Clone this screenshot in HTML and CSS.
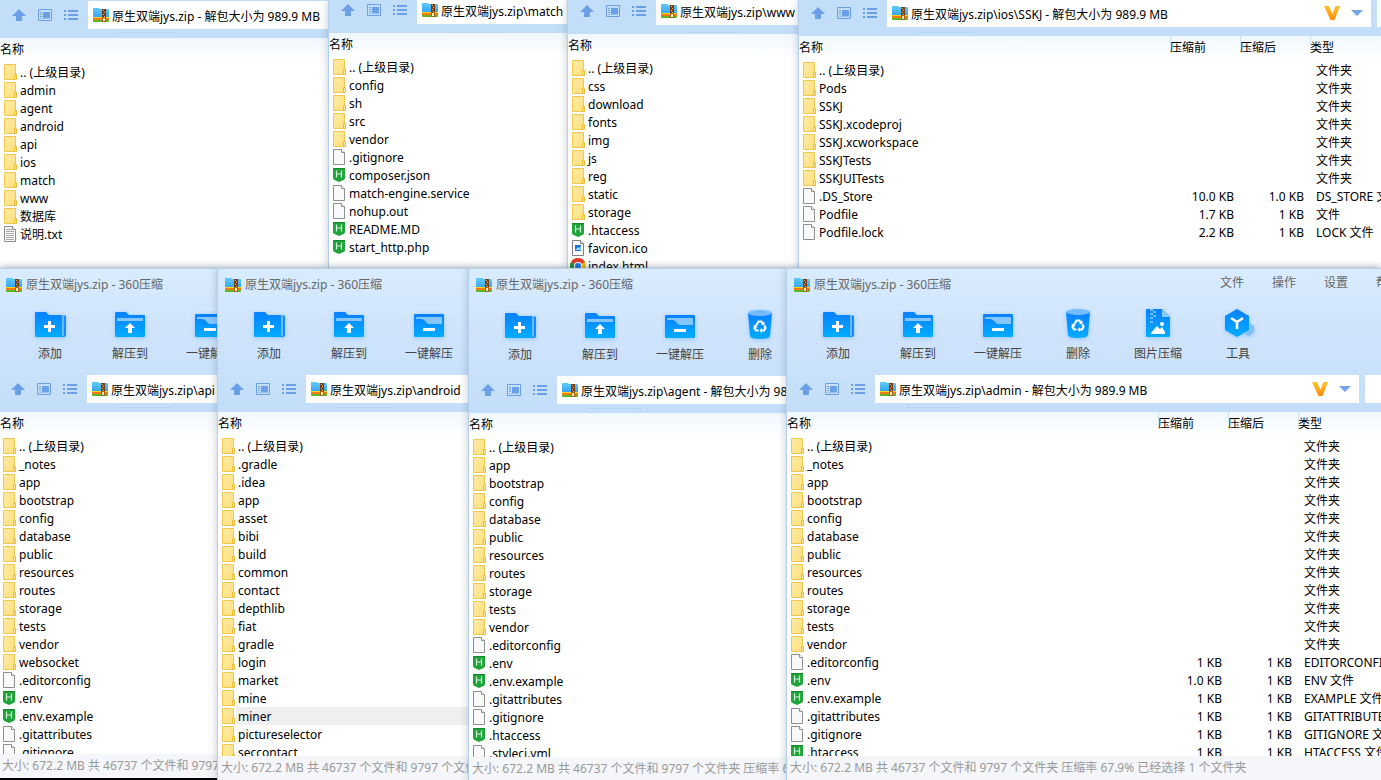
FILE: index.html
```html
<!DOCTYPE html>
<html lang="zh-CN">
<head>
<meta charset="utf-8">
<title>原生双端jys.zip - 360压缩</title>
<link rel="stylesheet" href="styles.css">
</head>
<body>
<svg class="sprite" aria-hidden="true">
  <defs>
    <linearGradient id="gBlue" x1="0" y1="0" x2="0" y2="1"><stop offset="0" stop-color="#0a80ff"/><stop offset="1" stop-color="#00adff"/></linearGradient>
    <linearGradient id="gFold" x1="0" y1="0" x2="1" y2="1"><stop offset="0" stop-color="#ffeaa6"/><stop offset="1" stop-color="#ffe07c"/></linearGradient>
    <linearGradient id="gZip" x1="0" y1="0" x2="0" y2="1"><stop offset="0" stop-color="#62cbfb"/><stop offset="1" stop-color="#2f9df0"/></linearGradient>
    <linearGradient id="gVip" x1="0" y1="0" x2="0" y2="1"><stop offset="0" stop-color="#ffc32e"/><stop offset="1" stop-color="#ff8a00"/></linearGradient>
  </defs>
  <symbol id="dir" viewBox="0 0 16 16"><path d="M.5.5h11v15H.5z" fill="url(#gFold)" stroke="#efc94f"/><path d="M10.500 10.500h2v5h-2z" fill="#ffe99b" stroke="#e9bd3c"/></symbol>
  <symbol id="doc" viewBox="0 0 16 16"><path d="M.5.5h8l3 3v12H.5z" fill="#f8f9fa" stroke="#8f8f8f"/><path d="M8.500.5v3h3" fill="#fff" stroke="#8f8f8f"/></symbol>
  <symbol id="txt" viewBox="0 0 16 16"><path d="M.5.5h8l3 3v12H.5z" fill="#f8f9fa" stroke="#8f8f8f"/><path d="M8.500.5v3h3" fill="#fff" stroke="#8f8f8f"/><path d="M2 3.500h6M2 5.500h8M2 7.500h8M2 9.500h8M2 11.500h8M2 13.500h8" stroke="#a9a9a9"/></symbol>
  <symbol id="hb" viewBox="0 0 16 16"><path d="M0 1h12v10q0 1.500-1.500 2L6 15l-4.500-2Q0 12.500 0 11z" fill="#1ea439"/><path d="M0 1h12v1H0z" fill="#178a2e"/><path d="M3.500 3.500v7M8.500 3.500v7M3.500 7h5" stroke="#d9f4dd" stroke-width="1.200" fill="none"/></symbol>
  <symbol id="ico" viewBox="0 0 16 16"><path d="M.5.5h8l3 3v12H.5z" fill="#fff" stroke="#7d7d7d"/><path d="M8.500.5v3h3" fill="#fff" stroke="#7d7d7d"/><path d="M3 5h6v6H3z" fill="#1c6fd6"/><path d="M3 10l3-3 1 1 2-2v4z" fill="#8fd0ff"/></symbol>
  <symbol id="chrome" viewBox="0 0 16 16"><circle cx="8" cy="8" r="8" fill="#fbc116"/><path d="M8 8L1.070 4A8 8 0 0 1 14.930 4z" fill="#e33b2e"/><path d="M8 8L8 16A8 8 0 0 1 1.070 4z" fill="#229342"/><circle cx="8" cy="8" r="4" fill="#fff"/><circle cx="8" cy="8" r="3" fill="#1a73e8"/></symbol>
  <symbol id="zip" viewBox="0 0 16 14"><path d="M0 0h6l1 1h8q1 0 1 1v9H0z" fill="url(#gZip)"/><path d="M0 9h16v1H0z" fill="#ffd21c"/><path d="M0 10h16v2H0z" fill="#f27c12"/><path d="M0 12h16v1q0 1-1 1H1q-1 0-1-1z" fill="#5fb51f"/><path d="M9 1h4v9H9z" fill="#7a3b12"/><path d="M10 2h1v1h-1zM11 4h1v1h-1zM10 6h1v1h-1zM11 8h1v1h-1z" fill="#ffb84a"/><path d="M9 9h4v5H9z" fill="#a3601c"/><path d="M10 10h2v3h-2z" fill="#fff1a8"/></symbol>
  <symbol id="up" viewBox="0 0 14 14"><path d="M7 1l7 7h-4v5H4V8H0z" fill="#6b9fe8"/></symbol>
  <symbol id="pane" viewBox="0 0 14 14"><path d="M.5 1.500h13v11H.5z" fill="none" stroke="#6b9fe8"/><path d="M5 4h7v6H5zM2 4h2v1H2zM2 6h2v1H2zM2 8h2v1H2z" fill="#6b9fe8"/><path d="M2 10h10v1H2z" fill="#9cc0f0"/></symbol>
  <symbol id="list" viewBox="0 0 14 14"><path d="M0 2h2v2H0zM4 2h10v2H4zM0 6h2v2H0zM4 6h10v2H4zM0 10h2v2H0zM4 10h10v2H4z" fill="#6b9fe8"/></symbol>
  <symbol id="vip" viewBox="0 0 16 14"><path d="M0 0h5l3.500 8L11.500 0H16l-5.500 14h-4z" fill="url(#gVip)"/></symbol>
  <symbol id="drop" viewBox="0 0 12 6"><path d="M0 0h12L6 6z" fill="#73a5ec"/></symbol>
  <symbol id="add" viewBox="0 0 32 32"><path d="M26 7h5q1 0 1 1v19q0 1-1 1h-5z" fill="#6cb8ff"/><path d="M30 8h2v19q0 2-2 2h-4v-1h3q1 0 1-1z" fill="#158dff"/><path d="M2 4h10l3 3h12q1 0 1 1v21H2q-1 0-1-1V5q0-1 1-1z" fill="url(#gBlue)"/><path d="M14 13h3v4h4v3h-4v4h-3v-4h-4v-3h4z" fill="#fff"/></symbol>
  <symbol id="extract" viewBox="0 0 32 32"><path d="M2 4h10l3 3h15q1 0 1 1v20q0 1-1 1H2q-1 0-1-1V5q0-1 1-1z" fill="url(#gBlue)"/><path d="M3 13v-2q0-1 1-1h24q1 0 1 1v2z" fill="#85c6ff"/><path d="M16 15l5 5h-3v5h-4v-5h-3z" fill="#fff"/></symbol>
  <symbol id="oneclick" viewBox="0 0 32 32"><rect x="1" y="6" width="30" height="23" rx="1" fill="url(#gBlue)"/><path d="M3 11v-1q0-1 1-1h24q1 0 1 1v6H17q-2 0-3-1l-3-3q-1-1-3-1z" fill="#85c6ff"/><path d="M10 20h12v3H10z" fill="#fff"/></symbol>
  <symbol id="trash" viewBox="0 0 32 32"><path d="M4 4h24l-2 23q-.3 3-10 3T6 27z" fill="url(#gBlue)"/><ellipse cx="16" cy="4" rx="12" ry="3" fill="#74bcff"/><g fill="none" stroke="#fff" stroke-width="2.200"><path d="M12.500 16l2-3.500h3l1.500 2.500"/><path d="M20.500 16.500l1 2.500-1.500 2.500h-3"/><path d="M14.500 21.500H12L10.500 19l1-2"/></g><path d="M20.500 12.500v4l-3.500-1zM18 19v5l-2.500-2.500zM9 16.500l3.500-1 .8 3.600z" fill="#fff"/></symbol>
  <symbol id="image" viewBox="0 0 32 32"><path d="M5 1h15l8 8v19q0 1-1 1H5q-1 0-1-1V2q0-1 1-1z" fill="url(#gBlue)"/><path d="M20 1l8 8h-8z" fill="#8cc9ff"/><path d="M8 1h3v2H8zM11 3h3v2h-3zM8 5h3v2H8zM11 7h3v2h-3zM8 9h3v2H8zM8 13h3v2H8z" fill="#72baff"/><path d="M9 26v-1l6-7 3 3 2-2 3 5v2z" fill="#fff"/><circle cx="20" cy="16" r="2" fill="#fff"/></symbol>
  <symbol id="tools" viewBox="0 0 32 32"><path d="M27 15l5 3v6l-5 4-4-2z" fill="#7fc1fb"/><path d="M15 1l12 7v14l-12 7-12-7V8z" fill="url(#gBlue)"/><path d="M9 10l6 4 6-4M15 14v7" fill="none" stroke="#fff" stroke-width="2.600"/></symbol>
</svg>

<main class="desktop">
<div class="row row-top">
  <section class="win win-root">
    <nav class="nav nav-38">
      <button class="nb" aria-label="向上"><svg><use href="#up"/></svg></button><button class="nb" aria-label="预览"><svg><use href="#pane"/></svg></button><button class="nb" aria-label="列表"><svg><use href="#list"/></svg></button>
      <label class="addr"><svg class="zip"><use href="#zip"/></svg><input aria-label="路径" value="原生双端jys.zip - 解包大小为 989.9 MB"></label>
    </nav>
    <div class="files"><table>
      <thead><tr><th>名称</th></tr></thead>
      <tbody>
      <tr><td><svg><use href="#dir"/></svg>.. (上级目录)</td></tr>
      <tr><td><svg><use href="#dir"/></svg>admin</td></tr>
      <tr><td><svg><use href="#dir"/></svg>agent</td></tr>
      <tr><td><svg><use href="#dir"/></svg>android</td></tr>
      <tr><td><svg><use href="#dir"/></svg>api</td></tr>
      <tr><td><svg><use href="#dir"/></svg>ios</td></tr>
      <tr><td><svg><use href="#dir"/></svg>match</td></tr>
      <tr><td><svg><use href="#dir"/></svg>www</td></tr>
      <tr><td><svg><use href="#dir"/></svg>数据库</td></tr>
      <tr><td><svg><use href="#txt"/></svg>说明.txt</td></tr>
      </tbody>
    </table></div>
  </section>

  <section class="win">
    <nav class="nav nav-33">
      <button class="nb" aria-label="向上"><svg><use href="#up"/></svg></button><button class="nb" aria-label="预览"><svg><use href="#pane"/></svg></button><button class="nb" aria-label="列表"><svg><use href="#list"/></svg></button>
      <label class="addr"><svg class="zip"><use href="#zip"/></svg><input aria-label="路径" value="原生双端jys.zip\match"></label>
    </nav>
    <div class="files"><table>
      <thead><tr><th>名称</th></tr></thead>
      <tbody>
      <tr><td><svg><use href="#dir"/></svg>.. (上级目录)</td></tr>
      <tr><td><svg><use href="#dir"/></svg>config</td></tr>
      <tr><td><svg><use href="#dir"/></svg>sh</td></tr>
      <tr><td><svg><use href="#dir"/></svg>src</td></tr>
      <tr><td><svg><use href="#dir"/></svg>vendor</td></tr>
      <tr><td><svg><use href="#doc"/></svg>.gitignore</td></tr>
      <tr><td><svg><use href="#hb"/></svg>composer.json</td></tr>
      <tr><td><svg><use href="#doc"/></svg>match-engine.service</td></tr>
      <tr><td><svg><use href="#doc"/></svg>nohup.out</td></tr>
      <tr><td><svg><use href="#hb"/></svg>README.MD</td></tr>
      <tr><td><svg><use href="#hb"/></svg>start_http.php</td></tr>
      </tbody>
    </table></div>
  </section>

  <section class="win">
    <nav class="nav nav-34">
      <button class="nb" aria-label="向上"><svg><use href="#up"/></svg></button><button class="nb" aria-label="预览"><svg><use href="#pane"/></svg></button><button class="nb" aria-label="列表"><svg><use href="#list"/></svg></button>
      <label class="addr"><svg class="zip"><use href="#zip"/></svg><input aria-label="路径" value="原生双端jys.zip\www"></label>
    </nav>
    <div class="files"><table>
      <thead><tr><th>名称</th></tr></thead>
      <tbody>
      <tr><td><svg><use href="#dir"/></svg>.. (上级目录)</td></tr>
      <tr><td><svg><use href="#dir"/></svg>css</td></tr>
      <tr><td><svg><use href="#dir"/></svg>download</td></tr>
      <tr><td><svg><use href="#dir"/></svg>fonts</td></tr>
      <tr><td><svg><use href="#dir"/></svg>img</td></tr>
      <tr><td><svg><use href="#dir"/></svg>js</td></tr>
      <tr><td><svg><use href="#dir"/></svg>reg</td></tr>
      <tr><td><svg><use href="#dir"/></svg>static</td></tr>
      <tr><td><svg><use href="#dir"/></svg>storage</td></tr>
      <tr><td><svg><use href="#hb"/></svg>.htaccess</td></tr>
      <tr><td><svg><use href="#ico"/></svg>favicon.ico</td></tr>
      <tr><td><svg class="wide"><use href="#chrome"/></svg>index.html</td></tr>
      </tbody>
    </table></div>
  </section>

  <section class="win">
    <nav class="nav nav-36">
      <button class="nb" aria-label="向上"><svg><use href="#up"/></svg></button><button class="nb" aria-label="预览"><svg><use href="#pane"/></svg></button><button class="nb" aria-label="列表"><svg><use href="#list"/></svg></button>
      <label class="addr"><svg class="zip"><use href="#zip"/></svg><input aria-label="路径" value="原生双端jys.zip\ios\SSKJ - 解包大小为 989.9 MB"><svg class="vip"><use href="#vip"/></svg><svg class="drop"><use href="#drop"/></svg></label>
      <input class="search search-s" aria-label="搜索">
    </nav>
    <div class="files"><table class="full">
      <colgroup><col class="c-name"><col class="c-size"><col class="c-size"><col></colgroup>
      <thead><tr><th>名称</th><th>压缩前</th><th>压缩后</th><th>类型</th></tr></thead>
      <tbody>
      <tr><td><svg><use href="#dir"/></svg>.. (上级目录)</td><td></td><td></td><td>文件夹</td></tr>
      <tr><td><svg><use href="#dir"/></svg>Pods</td><td></td><td></td><td>文件夹</td></tr>
      <tr><td><svg><use href="#dir"/></svg>SSKJ</td><td></td><td></td><td>文件夹</td></tr>
      <tr><td><svg><use href="#dir"/></svg>SSKJ.xcodeproj</td><td></td><td></td><td>文件夹</td></tr>
      <tr><td><svg><use href="#dir"/></svg>SSKJ.xcworkspace</td><td></td><td></td><td>文件夹</td></tr>
      <tr><td><svg><use href="#dir"/></svg>SSKJTests</td><td></td><td></td><td>文件夹</td></tr>
      <tr><td><svg><use href="#dir"/></svg>SSKJUITests</td><td></td><td></td><td>文件夹</td></tr>
      <tr><td><svg><use href="#doc"/></svg>.DS_Store</td><td>10.0 KB</td><td>1.0 KB</td><td>DS_STORE 文件</td></tr>
      <tr><td><svg><use href="#doc"/></svg>Podfile</td><td>1.7 KB</td><td>1 KB</td><td>文件</td></tr>
      <tr><td><svg><use href="#doc"/></svg>Podfile.lock</td><td>2.2 KB</td><td>1 KB</td><td>LOCK 文件</td></tr>
      </tbody>
    </table></div>
  </section>
</div>

<div class="row row-bottom">
  <section class="win win-api">
    <header class="title"><svg class="zip"><use href="#zip"/></svg><span>原生双端jys.zip - 360压缩</span></header>
    <div class="ribbon">
      <button><svg><use href="#add"/></svg>添加</button><button><svg><use href="#extract"/></svg>解压到</button><button><svg><use href="#oneclick"/></svg>一键解压</button>
    </div>
    <nav class="nav">
      <button class="nb" aria-label="向上"><svg><use href="#up"/></svg></button><button class="nb" aria-label="预览"><svg><use href="#pane"/></svg></button><button class="nb" aria-label="列表"><svg><use href="#list"/></svg></button>
      <label class="addr"><svg class="zip"><use href="#zip"/></svg><input aria-label="路径" value="原生双端jys.zip\api"></label>
    </nav>
    <div class="files"><table>
      <thead><tr><th>名称</th></tr></thead>
      <tbody>
      <tr><td><svg><use href="#dir"/></svg>.. (上级目录)</td></tr>
      <tr><td><svg><use href="#dir"/></svg>_notes</td></tr>
      <tr><td><svg><use href="#dir"/></svg>app</td></tr>
      <tr><td><svg><use href="#dir"/></svg>bootstrap</td></tr>
      <tr><td><svg><use href="#dir"/></svg>config</td></tr>
      <tr><td><svg><use href="#dir"/></svg>database</td></tr>
      <tr><td><svg><use href="#dir"/></svg>public</td></tr>
      <tr><td><svg><use href="#dir"/></svg>resources</td></tr>
      <tr><td><svg><use href="#dir"/></svg>routes</td></tr>
      <tr><td><svg><use href="#dir"/></svg>storage</td></tr>
      <tr><td><svg><use href="#dir"/></svg>tests</td></tr>
      <tr><td><svg><use href="#dir"/></svg>vendor</td></tr>
      <tr><td><svg><use href="#dir"/></svg>websocket</td></tr>
      <tr><td><svg><use href="#doc"/></svg>.editorconfig</td></tr>
      <tr><td><svg><use href="#hb"/></svg>.env</td></tr>
      <tr><td><svg><use href="#hb"/></svg>.env.example</td></tr>
      <tr><td><svg><use href="#doc"/></svg>.gitattributes</td></tr>
      <tr><td><svg><use href="#doc"/></svg>.gitignore</td></tr>
      </tbody>
    </table></div>
    <footer class="status">大小: 672.2 MB 共 46737 个文件和 9797 个文件夹</footer>
  </section>

  <section class="win">
    <header class="title"><svg class="zip"><use href="#zip"/></svg><span>原生双端jys.zip - 360压缩</span></header>
    <div class="ribbon">
      <button><svg><use href="#add"/></svg>添加</button><button><svg><use href="#extract"/></svg>解压到</button><button><svg><use href="#oneclick"/></svg>一键解压</button>
    </div>
    <nav class="nav">
      <button class="nb" aria-label="向上"><svg><use href="#up"/></svg></button><button class="nb" aria-label="预览"><svg><use href="#pane"/></svg></button><button class="nb" aria-label="列表"><svg><use href="#list"/></svg></button>
      <label class="addr"><svg class="zip"><use href="#zip"/></svg><input aria-label="路径" value="原生双端jys.zip\android"></label>
    </nav>
    <div class="files"><table>
      <thead><tr><th>名称</th></tr></thead>
      <tbody>
      <tr><td><svg><use href="#dir"/></svg>.. (上级目录)</td></tr>
      <tr><td><svg><use href="#dir"/></svg>.gradle</td></tr>
      <tr><td><svg><use href="#dir"/></svg>.idea</td></tr>
      <tr><td><svg><use href="#dir"/></svg>app</td></tr>
      <tr><td><svg><use href="#dir"/></svg>asset</td></tr>
      <tr><td><svg><use href="#dir"/></svg>bibi</td></tr>
      <tr><td><svg><use href="#dir"/></svg>build</td></tr>
      <tr><td><svg><use href="#dir"/></svg>common</td></tr>
      <tr><td><svg><use href="#dir"/></svg>contact</td></tr>
      <tr><td><svg><use href="#dir"/></svg>depthlib</td></tr>
      <tr><td><svg><use href="#dir"/></svg>fiat</td></tr>
      <tr><td><svg><use href="#dir"/></svg>gradle</td></tr>
      <tr><td><svg><use href="#dir"/></svg>login</td></tr>
      <tr><td><svg><use href="#dir"/></svg>market</td></tr>
      <tr><td><svg><use href="#dir"/></svg>mine</td></tr>
      <tr class="hover"><td><svg><use href="#dir"/></svg>miner</td></tr>
      <tr><td><svg><use href="#dir"/></svg>pictureselector</td></tr>
      <tr><td><svg><use href="#dir"/></svg>seccontact</td></tr>
      </tbody>
    </table></div>
    <footer class="status">大小: 672.2 MB 共 46737 个文件和 9797 个文件夹</footer>
  </section>

  <section class="win win-agent">
    <header class="title"><svg class="zip"><use href="#zip"/></svg><span>原生双端jys.zip - 360压缩</span></header>
    <div class="ribbon">
      <button><svg><use href="#add"/></svg>添加</button><button><svg><use href="#extract"/></svg>解压到</button><button><svg><use href="#oneclick"/></svg>一键解压</button><button><svg><use href="#trash"/></svg>删除</button>
    </div>
    <nav class="nav">
      <button class="nb" aria-label="向上"><svg><use href="#up"/></svg></button><button class="nb" aria-label="预览"><svg><use href="#pane"/></svg></button><button class="nb" aria-label="列表"><svg><use href="#list"/></svg></button>
      <label class="addr"><svg class="zip"><use href="#zip"/></svg><input aria-label="路径" value="原生双端jys.zip\agent - 解包大小为 989.9 MB"></label>
    </nav>
    <div class="files"><table>
      <thead><tr><th>名称</th></tr></thead>
      <tbody>
      <tr><td><svg><use href="#dir"/></svg>.. (上级目录)</td></tr>
      <tr><td><svg><use href="#dir"/></svg>app</td></tr>
      <tr><td><svg><use href="#dir"/></svg>bootstrap</td></tr>
      <tr><td><svg><use href="#dir"/></svg>config</td></tr>
      <tr><td><svg><use href="#dir"/></svg>database</td></tr>
      <tr><td><svg><use href="#dir"/></svg>public</td></tr>
      <tr><td><svg><use href="#dir"/></svg>resources</td></tr>
      <tr><td><svg><use href="#dir"/></svg>routes</td></tr>
      <tr><td><svg><use href="#dir"/></svg>storage</td></tr>
      <tr><td><svg><use href="#dir"/></svg>tests</td></tr>
      <tr><td><svg><use href="#dir"/></svg>vendor</td></tr>
      <tr><td><svg><use href="#doc"/></svg>.editorconfig</td></tr>
      <tr><td><svg><use href="#hb"/></svg>.env</td></tr>
      <tr><td><svg><use href="#hb"/></svg>.env.example</td></tr>
      <tr><td><svg><use href="#doc"/></svg>.gitattributes</td></tr>
      <tr><td><svg><use href="#doc"/></svg>.gitignore</td></tr>
      <tr><td><svg><use href="#hb"/></svg>.htaccess</td></tr>
      <tr><td><svg><use href="#doc"/></svg>.styleci.yml</td></tr>
      </tbody>
    </table></div>
    <footer class="status">大小: 672.2 MB 共 46737 个文件和 9797 个文件夹 压缩率 67.9%</footer>
  </section>

  <section class="win">
    <header class="title"><svg class="zip"><use href="#zip"/></svg><span>原生双端jys.zip - 360压缩</span>
      <div class="menu"><button>文件</button><button>操作</button><button>设置</button><button>帮助</button></div>
    </header>
    <div class="ribbon">
      <button><svg><use href="#add"/></svg>添加</button><button><svg><use href="#extract"/></svg>解压到</button><button><svg><use href="#oneclick"/></svg>一键解压</button><button><svg><use href="#trash"/></svg>删除</button><button><svg><use href="#image"/></svg>图片压缩</button><button><svg><use href="#tools"/></svg>工具</button>
    </div>
    <nav class="nav">
      <button class="nb" aria-label="向上"><svg><use href="#up"/></svg></button><button class="nb" aria-label="预览"><svg><use href="#pane"/></svg></button><button class="nb" aria-label="列表"><svg><use href="#list"/></svg></button>
      <label class="addr"><svg class="zip"><use href="#zip"/></svg><input aria-label="路径" value="原生双端jys.zip\admin - 解包大小为 989.9 MB"><svg class="vip"><use href="#vip"/></svg><svg class="drop"><use href="#drop"/></svg></label>
      <input class="search" aria-label="搜索">
    </nav>
    <div class="files"><table class="full">
      <colgroup><col class="c-name"><col class="c-size"><col class="c-size"><col></colgroup>
      <thead><tr><th>名称</th><th>压缩前</th><th>压缩后</th><th>类型</th></tr></thead>
      <tbody>
      <tr><td><svg><use href="#dir"/></svg>.. (上级目录)</td><td></td><td></td><td>文件夹</td></tr>
      <tr><td><svg><use href="#dir"/></svg>_notes</td><td></td><td></td><td>文件夹</td></tr>
      <tr><td><svg><use href="#dir"/></svg>app</td><td></td><td></td><td>文件夹</td></tr>
      <tr><td><svg><use href="#dir"/></svg>bootstrap</td><td></td><td></td><td>文件夹</td></tr>
      <tr><td><svg><use href="#dir"/></svg>config</td><td></td><td></td><td>文件夹</td></tr>
      <tr><td><svg><use href="#dir"/></svg>database</td><td></td><td></td><td>文件夹</td></tr>
      <tr><td><svg><use href="#dir"/></svg>public</td><td></td><td></td><td>文件夹</td></tr>
      <tr><td><svg><use href="#dir"/></svg>resources</td><td></td><td></td><td>文件夹</td></tr>
      <tr><td><svg><use href="#dir"/></svg>routes</td><td></td><td></td><td>文件夹</td></tr>
      <tr><td><svg><use href="#dir"/></svg>storage</td><td></td><td></td><td>文件夹</td></tr>
      <tr><td><svg><use href="#dir"/></svg>tests</td><td></td><td></td><td>文件夹</td></tr>
      <tr><td><svg><use href="#dir"/></svg>vendor</td><td></td><td></td><td>文件夹</td></tr>
      <tr><td><svg><use href="#doc"/></svg>.editorconfig</td><td>1 KB</td><td>1 KB</td><td>EDITORCONFIG 文件</td></tr>
      <tr><td><svg><use href="#hb"/></svg>.env</td><td>1.0 KB</td><td>1 KB</td><td>ENV 文件</td></tr>
      <tr><td><svg><use href="#hb"/></svg>.env.example</td><td>1 KB</td><td>1 KB</td><td>EXAMPLE 文件</td></tr>
      <tr><td><svg><use href="#doc"/></svg>.gitattributes</td><td>1 KB</td><td>1 KB</td><td>GITATTRIBUTES 文件</td></tr>
      <tr><td><svg><use href="#doc"/></svg>.gitignore</td><td>1 KB</td><td>1 KB</td><td>GITIGNORE 文件</td></tr>
      <tr><td><svg><use href="#hb"/></svg>.htaccess</td><td>1 KB</td><td>1 KB</td><td>HTACCESS 文件</td></tr>
      </tbody>
    </table></div>
    <footer class="status">大小: 672.2 MB 共 46737 个文件和 9797 个文件夹 压缩率 67.9% 已经选择 1 个文件夹</footer>
  </section>
</div>
</main>
</body>
</html>
```
FILE: styles.css
```css
* { box-sizing: border-box; }

body {
  margin: 0;
  background: #fff;
  color: #000;
  font: 12px/18px "Noto Sans", "Noto Sans CJK SC", sans-serif;
}

button,
input {
  font: inherit;
  color: inherit;
  border: 0;
  margin: 0;
  padding: 0;
  background: none;
}

.sprite {
  position: absolute;
  width: 0;
  height: 0;
}

/* Desktop: two rows of overlapping archive windows */
.desktop {
  display: grid;
  grid-template-rows: 268px minmax(0, 1fr);
  height: 100vh;
  overflow: hidden;
}

.row {
  display: grid;
  min-height: 0;
}

.row-top { grid-template-columns: 328fr 239fr 231fr 583fr; }

.row-bottom {
  grid-template-columns: 217fr 251fr 318fr 595fr;
  position: relative;
  box-shadow: 0 0 6px rgba(60, 80, 100, .35);
}

.win {
  position: relative;
  display: flex;
  flex-direction: column;
  min-width: 0;
  min-height: 0;
  overflow: hidden;
  white-space: nowrap;
  border-left: 1px solid #b3d1ef;
  box-shadow: 0 0 8px rgba(60, 80, 100, .3);
  background: linear-gradient(#d9ecff, #cfe4fb 64px, #c3def9 144px, #fff 144px);
}

.row-top .win { background: #fff; }
.row-bottom .win { border-top: 1px solid #b3d1ef; }
.win.win-root,
.win.win-api { border-left: 0; }
.row-bottom .win-api { border-bottom: 2px solid #000; }

/* Title bar */
.title {
  display: flex;
  align-items: center;
  flex: none;
  gap: 4px;
  height: 31px;
  padding-left: 7px;
  color: #666;
}

.win-api .title { padding-left: 6px; }
.win-agent .title { height: 32px; }

.zip {
  flex: none;
  width: 16px;
  height: 14px;
}

.menu {
  display: flex;
  gap: 28px;
  margin-left: auto;
  margin-right: -19px;
  padding-bottom: 4px;
}

/* Large command buttons */
.ribbon {
  display: flex;
  flex: none;
  height: 75px;
  padding-left: 11px;
  color: #444;
}

.win-api .ribbon { padding-left: 10px; }

.ribbon button {
  display: flex;
  flex: none;
  flex-direction: column;
  align-items: center;
  gap: 5px;
  width: 80px;
  padding-top: 8px;
}

.ribbon svg {
  width: 32px;
  height: 32px;
  filter: drop-shadow(0 1px 2px rgba(0, 120, 255, .3));
}

/* Navigation and address bar */
.nav {
  display: flex;
  flex: none;
  align-items: flex-end;
  height: 37px;
  padding: 0 0 9px 12px;
  background: linear-gradient(#b7d6f3, #b7d6f3) 119px 32px / 54px 1px no-repeat;
}

.row-top .nav { background-color: #c3def9; }
.win-api .nav { padding-left: 11px; }
.nav-38 { height: 38px; }
.nav-33 { height: 33px; }
.nav-34 { height: 34px; }
.nav-36 { height: 36px; }

.nb {
  display: flex;
  align-items: center;
  flex: none;
  width: 26px;
  height: 28px;
}

.nb:nth-child(3) { width: 24px; }

.nb svg {
  width: 14px;
  height: 14px;
}

.addr {
  display: flex;
  align-items: center;
  flex: 1;
  gap: 3px;
  min-width: 0;
  height: 28px;
  padding-left: 5px;
  background: #fff;
}

.addr input {
  flex: 1;
  min-width: 0;
  height: 20px;
  padding-top: 2px;
  outline: 0;
}

.vip {
  flex: none;
  width: 16px;
  height: 14px;
}

.drop {
  flex: none;
  width: 12px;
  height: 6px;
  margin: 0 8px;
}

.search {
  flex: none;
  width: 16px;
  height: 28px;
  margin-left: 6px;
  background: #fff;
}

.search-s { width: 4px; }

/* File list */
.files {
  flex: 1;
  min-height: 0;
  overflow: hidden;
  background: linear-gradient(#f0f8ff, #fff 24px);
}

table {
  width: 100%;
  table-layout: fixed;
  border-collapse: collapse;
}

.c-name { width: 371px; }
.c-size { width: 70px; }

th {
  height: 25px;
  padding: 0 0 2px;
  font-weight: 400;
  text-align: left;
}

th + th {
  background: linear-gradient(#c3def9, #e6f2fd) left top / 1px 14px no-repeat;
}

td {
  height: 18px;
  padding: 2px 0 0;
  line-height: 16px;
}

td:first-child { padding-left: 4px; }
.win-api td:first-child { padding-left: 3px; }

td:nth-child(2),
td:nth-child(3) {
  padding-right: 6px;
  text-align: right;
}

td:nth-child(4) { padding-left: 6px; }

td svg {
  width: 16px;
  height: 16px;
  vertical-align: top;
  margin-top: -1px;
}

td .wide {
  margin-left: -2px;
  margin-right: 2px;
}

.hover td { background: linear-gradient(#efefef, #efefef) 18px 0 no-repeat; }

/* Status bar */
.status {
  flex: none;
  height: 24px;
  padding-left: 3px;
  line-height: 24px;
  color: #999;
  background: #f5f6fa;
}

.win-api .status { padding-left: 2px; }
.win-agent .status { height: 23px; }
```
